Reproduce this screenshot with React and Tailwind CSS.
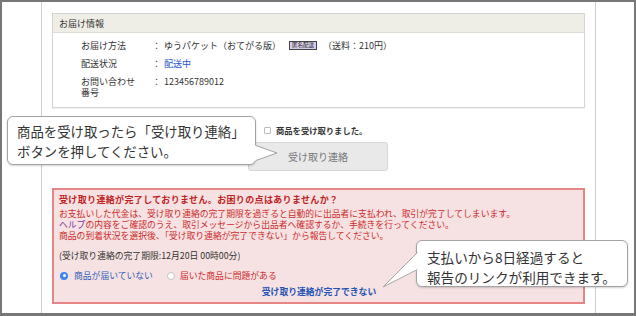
import React from 'react';

const font = { fontFamily: '"Noto Sans CJK JP", "Noto Sans", sans-serif' };

const InfoRow = ({ label, children }) => (
  <div className="flex leading-[11px]">
    <div className="w-[71px] shrink-0">{label}</div>
    <div className="w-[12px] shrink-0">：</div>
    <div>{children}</div>
  </div>
);

const Callout = ({ className, children }) => (
  <div
    className={`absolute bg-white border border-[#a3a3a3] rounded-[6px] shadow-[0_1px_2px_rgba(0,0,0,0.18)] text-[#333] leading-[20px] ${className}`}
  >
    {children}
  </div>
);

export default function App() {
  return (
    <div
      className="relative w-[636px] h-[316px] overflow-hidden bg-white border-2 border-b-[3px] border-[#777]"
      style={font}
    >
      {/* Page column */}
      <div className="ml-[39px] w-[555px] h-full border-x border-[#cfcfcf] px-[10px] pt-[11px] text-[9px] text-[#333]">
        {/* お届け情報 */}
        <div className="border border-[#d4d4d4] shadow-[0_1px_1px_rgba(0,0,0,0.06)]">
          <div className="h-[19px] bg-[#efeee6] border-b border-[#dcdcd4] pl-[6px] leading-[19px]">お届け情報</div>
          <div className="pl-[28px] pt-[7px] pb-[9px] flex flex-col gap-[7px]">
            <InfoRow label="お届け方法">
              <span className="flex items-center">
                ゆうパケット（おてがる版）
                <span className="ml-[8px] mr-[6px] inline-block border border-[#444] bg-[#d6cdea] text-[#222] text-[5.5px] leading-[7px] px-[2px]">
                  匿名配送
                </span>
                （送料：210円）
              </span>
            </InfoRow>
            <InfoRow label="配送状況">
              <span className="text-[#2255cc]">配送中</span>
            </InfoRow>
            <InfoRow label={<span>お問い合わせ<br />番号</span>}>123456789012</InfoRow>
          </div>
        </div>

        {/* 受け取り連絡 */}
        <div className="pl-[196px] mt-[17px]">
          <div className="pl-[16px] flex items-center h-[10px]">
            <span className="w-[7px] h-[7px] border border-[#bbb] rounded-[1px] bg-white" />
            <span className="ml-[5px] text-[8.3px] font-bold text-[#333]">商品を受け取りました。</span>
          </div>
          <div className="mt-[7px] w-[140px] h-[29px] bg-[#e9e9e9] border border-[#d6d6d6] rounded-[3px] flex items-center justify-center text-[10px] text-[#777]">
            受け取り連絡
          </div>
        </div>

        {/* 警告 */}
        <div className="mt-[17px] h-[116px] border-2 border-[#e58585] bg-[#f6e2e2] pl-[5px] pr-[4px] pt-[4px] text-[8.8px] leading-[11px] text-[#cc2b2b]">
          <div className="font-bold text-[9px] tracking-[0.35px] text-[#bf1f1f] mb-[3px]">
            受け取り連絡が完了しておりません。お困りの点はありませんか？
          </div>
          <div>お支払いした代金は、受け取り連絡の完了期限を過ぎると自動的に出品者に支払われ、取引が完了してしまいます。</div>
          <div>
            <span className="text-[#7a36a8]">ヘルプ</span>の内容をご確認のうえ、取引メッセージから出品者へ確認するか、手続きを行ってください。
          </div>
          <div>商品の到着状況を選択後、「受け取り連絡が完了できない」から報告してください。</div>
          <div className="mt-[9px] text-[#333]">(受け取り連絡の完了期限:12月20日 00時00分)</div>
          <div className="mt-[9px] flex items-center pl-[1px]">
            <span className="w-[8px] h-[8px] rounded-full bg-[#3d86ee] flex items-center justify-center">
              <span className="w-[3px] h-[3px] rounded-full bg-white" />
            </span>
            <span className="ml-[6px] text-[#2f5fb8]">商品が届いていない</span>
            <span className="ml-[14px] w-[8px] h-[8px] rounded-full bg-white border border-[#c4c4c4]" />
            <span className="ml-[5px]">届いた商品に問題がある</span>
          </div>
          <div className="mt-[5px] text-center font-bold text-[#2552b5]">受け取り連絡が完了できない</div>
        </div>
      </div>

      {/* Callout 1 */}
      <Callout className="left-[5px] top-[114px] w-[249px] h-[49px] pl-[9px] pt-[4px] text-[13.4px]">
        商品を受け取ったら「受け取り連絡」
        <br />
        ボタンを押してください。
      </Callout>
      <svg className="absolute left-[252px] top-[140px]" width="28" height="22" viewBox="0 0 28 22">
        <polygon points="0,3 23,11 0,19" fill="#fff" />
        <polyline points="2,3.5 23,11 2,18.5" fill="none" stroke="#a3a3a3" strokeWidth="1" />
      </svg>

      {/* Callout 2 */}
      <Callout className="left-[414px] top-[238px] w-[212px] h-[47px] pl-[10px] pt-[6px] text-[13.6px]">
        支払いから8日経過すると
        <br />
        報告のリンクが利用できます。
      </Callout>
      <svg className="absolute left-[379px] top-[246px]" width="40" height="42" viewBox="0 0 40 42">
        <polygon points="37,4 2,39 37,22" fill="#fff" />
        <polyline points="36.5,4.5 2,39 36.5,21.5" fill="none" stroke="#a3a3a3" strokeWidth="1" />
      </svg>
    </div>
  );
}
